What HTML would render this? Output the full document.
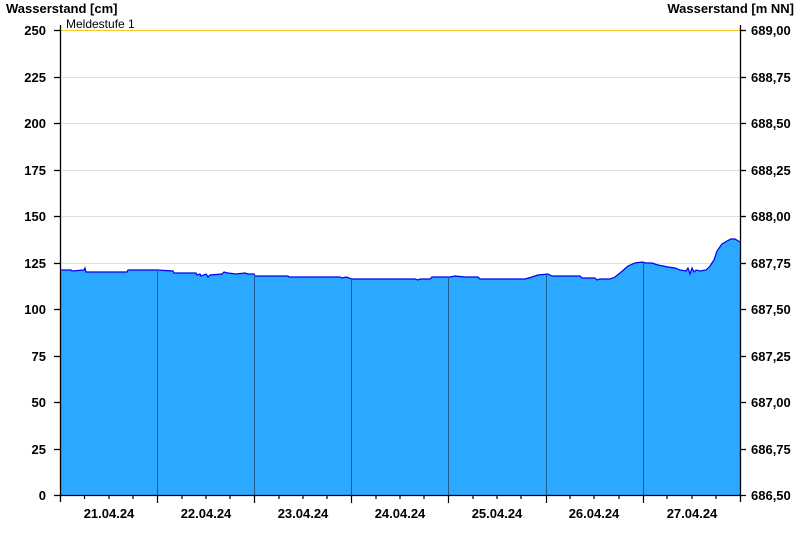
<!DOCTYPE html>
<html><head><style>
body{margin:0;background:#fff;width:800px;height:550px;overflow:hidden}
text{font-family:"Liberation Sans",Arial,sans-serif}
</style></head><body>
<svg width="800" height="550" xmlns="http://www.w3.org/2000/svg">
<g stroke="#e0e0e0" stroke-width="1">
<line x1="60" x2="740" y1="77.5" y2="77.5"/><line x1="60" x2="740" y1="123.5" y2="123.5"/>
<line x1="60" x2="740" y1="170.5" y2="170.5"/><line x1="60" x2="740" y1="216.5" y2="216.5"/>
<line x1="60" x2="740" y1="263.5" y2="263.5"/><line x1="60" x2="740" y1="309.5" y2="309.5"/>
<line x1="60" x2="740" y1="356.5" y2="356.5"/><line x1="60" x2="740" y1="402.5" y2="402.5"/>
<line x1="60" x2="740" y1="449.5" y2="449.5"/>
</g>
<line x1="60" x2="740" y1="30.5" y2="30.5" stroke="#f7c82a" stroke-width="1"/>
<polygon fill="#2ba8ff"
points="60,270 71,270 72,271 84,270 85,268 86,272 127,272 128,270 157,270 173,271 174,273 196,273 197,275 200,274 201,276 206,274 208,277 210,275 222,274 224,272 228,273 236,274 245,273 248,274 254,274 255,276 288,276 289,277 340,277 342,278 346,277 352,279 415,279 418,280 420,279 430,279 432,277 450,277 455,276 465,277 478,277 480,279 525,279 532,277 538,275 548,274 552,276 580,276 582,278 595,278 597,280 600,279 610,279 615,277 620,273 628,266 635,263 642,262 646,263 652,263 658,265 668,267 675,268 680,270 686,271 688,268 690,274 692,268 694,272 696,270 700,271 706,270 710,266 714,260 717,251 722,244 727,241 731,239 735,239 740,242 740,495 60,495"/>
<polyline fill="none" stroke="#0000ee" stroke-width="1.2"
points="60,270 71,270 72,271 84,270 85,268 86,272 127,272 128,270 157,270 173,271 174,273 196,273 197,275 200,274 201,276 206,274 208,277 210,275 222,274 224,272 228,273 236,274 245,273 248,274 254,274 255,276 288,276 289,277 340,277 342,278 346,277 352,279 415,279 418,280 420,279 430,279 432,277 450,277 455,276 465,277 478,277 480,279 525,279 532,277 538,275 548,274 552,276 580,276 582,278 595,278 597,280 600,279 610,279 615,277 620,273 628,266 635,263 642,262 646,263 652,263 658,265 668,267 675,268 680,270 686,271 688,268 690,274 692,268 694,272 696,270 700,271 706,270 710,266 714,260 717,251 722,244 727,241 731,239 735,239 740,242"/>
<g stroke="#1d5f8a" stroke-width="1">
<line x1="157.5" x2="157.5" y1="270" y2="495"/><line x1="254.5" x2="254.5" y1="275" y2="495"/>
<line x1="351.5" x2="351.5" y1="278" y2="495"/><line x1="448.5" x2="448.5" y1="277" y2="495"/>
<line x1="546.5" x2="546.5" y1="275" y2="495"/><line x1="643.5" x2="643.5" y1="263" y2="495"/>
</g>
<g stroke="#000" stroke-width="1.3">
<line x1="60.5" x2="60.5" y1="25" y2="502"/><line x1="740.5" x2="740.5" y1="25" y2="502"/>
<line x1="54" x2="746" y1="495.5" y2="495.5"/>
</g>
<g stroke="#000" stroke-width="1.3">
<line x1="54" x2="60" y1="30.5" y2="30.5"/><line x1="54" x2="60" y1="77.5" y2="77.5"/><line x1="54" x2="60" y1="123.5" y2="123.5"/><line x1="54" x2="60" y1="170.5" y2="170.5"/><line x1="54" x2="60" y1="216.5" y2="216.5"/><line x1="54" x2="60" y1="263.5" y2="263.5"/><line x1="54" x2="60" y1="309.5" y2="309.5"/><line x1="54" x2="60" y1="356.5" y2="356.5"/><line x1="54" x2="60" y1="402.5" y2="402.5"/><line x1="54" x2="60" y1="449.5" y2="449.5"/>
<line x1="740" x2="746" y1="30.5" y2="30.5"/><line x1="740" x2="746" y1="77.5" y2="77.5"/><line x1="740" x2="746" y1="123.5" y2="123.5"/><line x1="740" x2="746" y1="170.5" y2="170.5"/><line x1="740" x2="746" y1="216.5" y2="216.5"/><line x1="740" x2="746" y1="263.5" y2="263.5"/><line x1="740" x2="746" y1="309.5" y2="309.5"/><line x1="740" x2="746" y1="356.5" y2="356.5"/><line x1="740" x2="746" y1="402.5" y2="402.5"/><line x1="740" x2="746" y1="449.5" y2="449.5"/>
</g>
<g stroke="#000" stroke-width="1.2">
<line x1="157.5" x2="157.5" y1="495" y2="503"/><line x1="254.5" x2="254.5" y1="495" y2="503"/><line x1="351.5" x2="351.5" y1="495" y2="503"/><line x1="448.5" x2="448.5" y1="495" y2="503"/><line x1="546.5" x2="546.5" y1="495" y2="503"/><line x1="643.5" x2="643.5" y1="495" y2="503"/>
<line x1="84.5" x2="84.5" y1="495" y2="499"/><line x1="109" x2="109" y1="495" y2="499"/><line x1="133" x2="133" y1="495" y2="499"/>
<line x1="182" x2="182" y1="495" y2="499"/><line x1="206" x2="206" y1="495" y2="499"/><line x1="230" x2="230" y1="495" y2="499"/>
<line x1="279" x2="279" y1="495" y2="499"/><line x1="303" x2="303" y1="495" y2="499"/><line x1="327" x2="327" y1="495" y2="499"/>
<line x1="376" x2="376" y1="495" y2="499"/><line x1="400" x2="400" y1="495" y2="499"/><line x1="424" x2="424" y1="495" y2="499"/>
<line x1="473" x2="473" y1="495" y2="499"/><line x1="497" x2="497" y1="495" y2="499"/><line x1="521" x2="521" y1="495" y2="499"/>
<line x1="570" x2="570" y1="495" y2="499"/><line x1="594" x2="594" y1="495" y2="499"/><line x1="619" x2="619" y1="495" y2="499"/>
<line x1="667" x2="667" y1="495" y2="499"/><line x1="692" x2="692" y1="495" y2="499"/><line x1="716" x2="716" y1="495" y2="499"/>
</g>
<g font-size="13" font-weight="bold" fill="#000">
<text x="6" y="13">Wasserstand [cm]</text>
<text x="794" y="13" text-anchor="end">Wasserstand [m NN]</text>
</g>
<text x="66" y="28" font-size="12" fill="#000">Meldestufe 1</text>
<g font-size="13" font-weight="bold" fill="#000" text-anchor="end">
<text x="46" y="35">250</text><text x="46" y="82">225</text><text x="46" y="128">200</text><text x="46" y="175">175</text><text x="46" y="221">150</text><text x="46" y="268">125</text><text x="46" y="314">100</text><text x="46" y="361">75</text><text x="46" y="407">50</text><text x="46" y="454">25</text><text x="46" y="500">0</text>
</g>
<g font-size="13" font-weight="bold" fill="#000">
<text x="751" y="35">689,00</text><text x="751" y="82">688,75</text><text x="751" y="128">688,50</text><text x="751" y="175">688,25</text><text x="751" y="221">688,00</text><text x="751" y="268">687,75</text><text x="751" y="314">687,50</text><text x="751" y="361">687,25</text><text x="751" y="407">687,00</text><text x="751" y="454">686,75</text><text x="751" y="500">686,50</text>
</g>
<g font-size="13" font-weight="bold" fill="#000" text-anchor="middle">
<text x="109" y="518">21.04.24</text><text x="206" y="518">22.04.24</text><text x="303" y="518">23.04.24</text><text x="400" y="518">24.04.24</text><text x="497" y="518">25.04.24</text><text x="594" y="518">26.04.24</text><text x="692" y="518">27.04.24</text>
</g>
</svg>
</body></html>
